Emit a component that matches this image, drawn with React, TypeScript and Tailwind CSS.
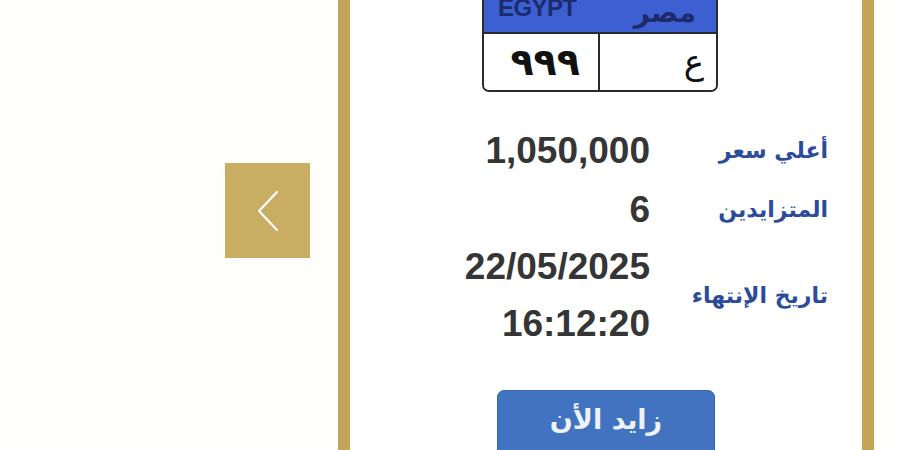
const rows = [
  { label: 'أعلي سعر', value: ['1,050,000'], h: 'h-[60px]' },
  { label: 'المتزايدين', value: ['6'], h: 'h-[58px]' },
  { label: 'تاريخ الإنتهاء', value: ['22/05/2025', '16:12:20'], h: 'h-[114px]' },
]

function Plate() {
  return (
    <div className="ml-[132px] -mt-[14px] w-[236px] rounded-b-[7px] border-2 border-t-0 border-[#2b2b2b] overflow-hidden">
      {/* blue header, top half is off screen */}
      <div className="h-[46px] bg-[#3c5fd1] flex items-end justify-between px-[14px] pb-[12px] font-['Liberation_Sans','DejaVu_Sans',sans-serif] font-bold text-[#1d2a6b]">
        <span className="text-[24px] leading-none tracking-tight">EGYPT</span>
        <span className="text-[28px] leading-none -mb-[7px] mr-[6px]">مصر</span>
      </div>
      <div className="flex h-[58px] border-t-2 border-[#2b2b2b] bg-white font-['DejaVu_Sans',sans-serif] font-bold text-[#111]">
        <div className="w-[116px] flex items-center justify-end pr-[18px] border-r-2 border-[#2b2b2b] text-[38px] leading-none">
          ٩٩٩
        </div>
        <div className="flex-1 flex items-center justify-end pr-[12px] text-[34px] leading-none font-normal">
          ع
        </div>
      </div>
    </div>
  )
}

export default function App() {
  return (
    <div className="w-[900px] h-[450px] overflow-hidden bg-[#fefefc] flex items-start">
      {/* previous arrow */}
      <div className="w-[338px] shrink-0 pt-[163px] pl-[225px]">
        <button
          type="button"
          className="w-[85px] h-[95px] bg-[#c8ad62] flex items-center justify-center"
        >
          <svg width="24" height="42" viewBox="0 0 24 42" fill="none">
            <path d="M21 2 L3 21 L21 40" stroke="white" strokeWidth="2.2" strokeLinecap="round" strokeLinejoin="round" />
          </svg>
        </button>
      </div>

      {/* auction card */}
      <div className="w-[536px] h-[520px] shrink-0 border-x-[12px] border-[#c3a558] bg-white">
        <Plate />

        <div className="mt-[28px] pr-[34px] font-['Liberation_Sans',sans-serif]">
          {rows.map((r) => (
            <div key={r.label} className={`grid grid-cols-[1fr_178px] ${r.h}`}>
              <div className="flex flex-col items-end justify-center text-[37px] font-bold text-[#353535] leading-[57px]">
                {r.value.map((v) => <span key={v}>{v}</span>)}
              </div>
              <div className="flex items-center justify-end font-['DejaVu_Sans',sans-serif] text-[22px] font-bold text-[#2b4b9c]">
                {r.label}
              </div>
            </div>
          ))}
        </div>

        <div className="mt-[38px] flex justify-center">
          <button
            type="button"
            className="w-[218px] h-[70px] rounded-[7px] bg-[#4273c0] border border-[#3a66ad] flex justify-center pt-[15px] font-['DejaVu_Sans',sans-serif] font-bold text-[27px] leading-none text-[#eef3fb]"
          >
            زايد الأن
          </button>
        </div>
      </div>
    </div>
  )
}
